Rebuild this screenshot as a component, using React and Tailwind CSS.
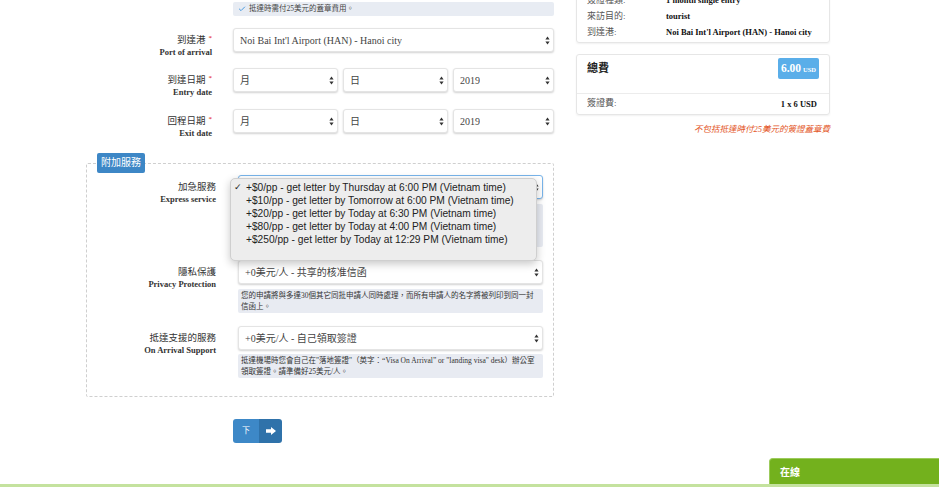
import { Check } from "lucide-react";

const Arrows = () => (
  <svg width="5" height="9" viewBox="0 0 5 9" className="shrink-0">
    <path d="M2.5 0.5 L4.6 3.4 H0.4 Z" fill="#333" />
    <path d="M2.5 8.5 L4.6 5.6 H0.4 Z" fill="#333" />
  </svg>
);

const Select = ({ value, className = "", focused }) => (
  <div
    className={`flex h-[24px] items-center justify-between rounded-[3px] border bg-white pl-[6px] pr-[3px] text-[10px] text-[#444] shadow-[0_1px_2px_rgba(0,0,0,0.18)] ${
      focused ? "border-[#78b4ea]" : "border-[#e4e4e4]"
    } ${className}`}
  >
    <span className="truncate">{value}</span>
    <Arrows />
  </div>
);

const Label = ({ zh, en, required }) => (
  <div className="pt-[6px] text-right text-[#333]">
    <div className="text-[9.5px] leading-[12px]">
      {zh}
      {required && <span className="ml-[3px] align-top text-[7px] leading-[8px] text-[#e00000]">*</span>}
    </div>
    <div className="text-[8.5px] font-bold leading-[12px]">{en}</div>
  </div>
);

const Note = ({ children, className = "" }) => (
  <div className={`rounded-[2px] bg-[#e8ebf2] px-[3px] py-[1px] text-[7.5px] leading-[11px] text-[#333] ${className}`}>
    {children}
  </div>
);

const expressOptions = [
  "+$0/pp - get letter by Thursday at 6:00 PM (Vietnam time)",
  "+$10/pp - get letter by Tomorrow at 6:00 PM (Vietnam time)",
  "+$20/pp - get letter by Today at 6:30 PM (Vietnam time)",
  "+$80/pp - get letter by Today at 4:00 PM (Vietnam time)",
  "+$250/pp - get letter by Today at 12:29 PM (Vietnam time)",
];

const InfoRow = ({ label, value }) => (
  <div className="flex leading-[16px]">
    <div className="w-[79px] shrink-0 text-[9px] text-[#555]">{label}</div>
    <div className="text-[8.5px] font-bold text-[#111]">{value}</div>
  </div>
);

export default function App() {
  return (
    <div className="relative min-h-[487px] overflow-hidden bg-white font-['Liberation_Serif','Noto_Sans_CJK_TC',serif]">
      <div className="flex gap-[22px] pl-[86px]">
        {/* left: form */}
        <div className="w-[468px] shrink-0 pt-[2px]">
          <div className="grid grid-cols-[126px_321px] gap-x-[21px]">
            <div />
            <div className="flex h-[14px] items-center gap-[3px] rounded-[2px] bg-[#e8ecf3] pl-[5px] text-[7.5px] text-[#444]">
              <Check size={8} strokeWidth={3} className="text-[#4a9be0]" />
              抵達時需付25美元的蓋章費用。
            </div>
          </div>

          <div className="mt-[12px] grid grid-cols-[126px_321px] gap-x-[21px]">
            <Label zh="到達港" en="Port of arrival" required />
            <Select value="Noi Bai Int'l Airport (HAN) - Hanoi city" />
          </div>

          <div className="mt-[10px] grid grid-cols-[126px_321px] gap-x-[21px]">
            <Label zh="到達日期" en="Entry date" required />
            <div className="flex gap-[5px]">
              <Select value="月" className="w-[105px]" />
              <Select value="日" className="w-[105px]" />
              <Select value="2019" className="flex-1" />
            </div>
          </div>

          <div className="mt-[11px] grid grid-cols-[126px_321px] gap-x-[21px]">
            <Label zh="回程日期" en="Exit date" required />
            <div className="flex gap-[5px]">
              <Select value="月" className="w-[105px]" />
              <Select value="日" className="w-[105px]" />
              <Select value="2019" className="flex-1" />
            </div>
          </div>

          <fieldset className="mt-[14px] rounded-[2px] border border-dashed border-[#cfcfcf] px-[10px] pb-[18px]">
            <legend className="h-[20px] rounded-[2px] bg-[#3d87c6] px-[4px] text-[10px] leading-[20px] text-white">
              附加服務
            </legend>

            <div className="mt-[2px] grid grid-cols-[119px_305px] gap-x-[22px]">
              <Label zh="加急服務" en="Express service" />
              <div className="relative">
                <Select value="+$0/pp - get letter by Thursday at 6:00 PM (Vietnam time)" focused className="h-[23px]" />
                <div className="mt-[5px] h-[43px] rounded-[2px] bg-[#e8ebf2]" />
                <div className="absolute left-[-8px] top-[3px] z-10 h-[83px] w-[307px] rounded-[5px] border border-[#cfcfcf] bg-[#ededed] pt-[1.5px] font-['Liberation_Sans',sans-serif] text-[10.2px] leading-[13px] text-[#222] shadow-[0_3px_8px_rgba(0,0,0,0.22)]">
                  {expressOptions.map((o, i) => (
                    <div key={o} className="flex items-center">
                      <span className="w-[15px] pl-[3px] text-[9px]">{i === 0 ? "✓" : ""}</span>
                      <span>{o}</span>
                    </div>
                  ))}
                </div>
              </div>
            </div>

            <div className="mt-[13px] grid grid-cols-[119px_305px] gap-x-[22px]">
              <Label zh="隱私保護" en="Privacy Protection" />
              <div>
                <Select value="+0美元/人 - 共享的核准信函" className="h-[23px]" />
                <Note className="mt-[5px]">
                  您的申請將與多達30個其它同批申請人同時處理，而所有申請人的名字將被列印到同一封信函上。
                </Note>
              </div>
            </div>

            <div className="mt-[13px] grid grid-cols-[119px_305px] gap-x-[22px]">
              <Label zh="抵達支援的服務" en="On Arrival Support" />
              <div>
                <Select value="+0美元/人 - 自己領取簽證" />
                <Note className="mt-[4px]">
                  抵達機場時您會自己在"落地簽證"（英字：“Visa On Arrival” or "landing visa" desk）辦公室領取簽證。請準備好25美元/人。
                </Note>
              </div>
            </div>
          </fieldset>

          <div className="ml-[147px] mt-[22px] flex h-[24px] w-[49px] overflow-hidden rounded-[3px] text-white">
            <div className="flex w-[26px] items-center justify-center bg-[#3d88c7] text-[8px]">下</div>
            <div className="flex flex-1 items-center justify-center bg-[#2f72aa]">
              <svg width="10" height="8" viewBox="0 0 10 8">
                <path d="M0 2.3 H5 V0 L10 4 L5 8 V5.7 H0 Z" fill="#fff" />
              </svg>
            </div>
          </div>
        </div>

        {/* right: summary */}
        <div className="w-[254px] shrink-0">
          <div className="-mt-[15px] rounded-[3px] border border-[#e6e6e6] px-[10px] pb-[2px] pt-[6px] shadow-[0_1px_2px_rgba(0,0,0,0.06)]">
            <InfoRow label="簽證種類:" value="1 month single entry" />
            <InfoRow label="來訪目的:" value="tourist" />
            <InfoRow label="到達港:" value="Noi Bai Int'l Airport (HAN) - Hanoi city" />
          </div>

          <div className="mt-[11px] rounded-[3px] border border-[#e6e6e6] shadow-[0_1px_2px_rgba(0,0,0,0.06)]">
            <div className="flex h-[39px] items-start justify-between border-b border-[#ececec] px-[10px] pt-[3px]">
              <div className="text-[11px] font-bold leading-[21px] text-[#222]">總費</div>
              <div className="flex h-[21px] w-[41px] items-center justify-center gap-[2px] rounded-[2px] bg-[#5aaee9] text-white">
                <span className="text-[11.5px] font-bold">6.00</span>
                <span className="mt-[2px] text-[6.5px] font-bold">USD</span>
              </div>
            </div>
            <div className="flex h-[20px] items-center justify-between px-[10px]">
              <span className="text-[9px] text-[#555]">簽證費:</span>
              <span className="pr-[2px] text-[8.5px] font-bold text-[#111]">1 x 6 USD</span>
            </div>
          </div>

          <div className="mt-[8px] text-right text-[8.5px] italic leading-[12px] text-[#e3561f]">
            不包括抵達時付25美元的簽證蓋章費
          </div>
        </div>
      </div>

      {/* chat widget */}
      <div className="fixed bottom-0 left-0 right-0 h-[3px] bg-[#c4e29e]" />
      <div className="fixed bottom-[3px] right-0 flex h-[26px] w-[170px] items-center rounded-tl-[4px] border-l border-t border-[#9ccb5c] bg-[#73b11d] pl-[10px] font-['Noto_Sans_CJK_TC',sans-serif] text-[10px] font-bold text-white">
        在線
      </div>
    </div>
  );
}
